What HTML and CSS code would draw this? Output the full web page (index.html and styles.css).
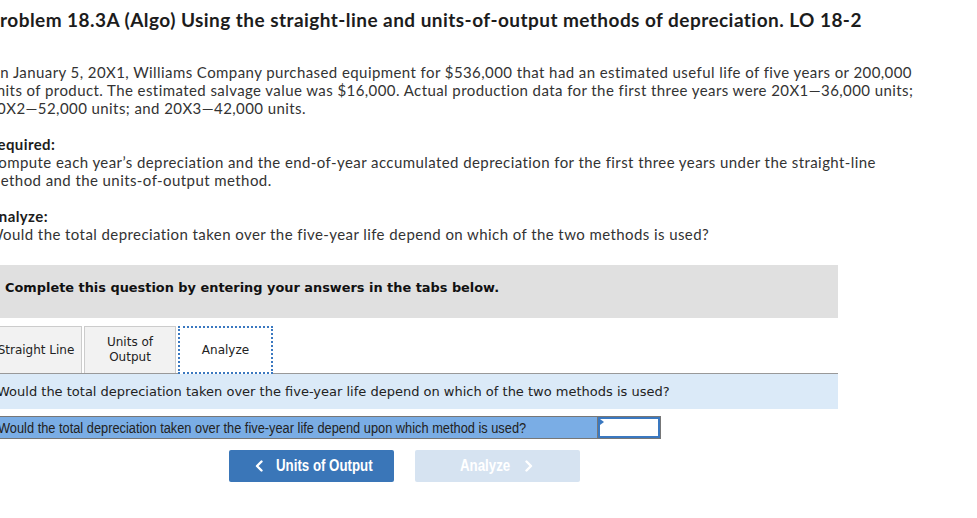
FILE: index.html
```html
<!DOCTYPE html>
<html>
<head>
<meta charset="utf-8">
<link rel="stylesheet" href="styles.css">
</head>
<body>
<div class="page">
  <h1 class="title">Problem 18.3A (Algo) Using the straight-line and units-of-output methods of depreciation. LO 18-2</h1>
  <p class="para">On January 5, 20X1, Williams Company purchased equipment for $536,000 that had an estimated useful life of five years or 200,000 units of product. The estimated salvage value was $16,000. Actual production data for the first three years were 20X1—36,000 units; 20X2—52,000 units; and 20X3—42,000 units.</p>
  <div class="section">
    <div class="label">Required:</div>
    <p class="para">Compute each year’s depreciation and the end-of-year accumulated depreciation for the first three years under the straight-line method and the units-of-output method.</p>
  </div>
  <div class="section">
    <div class="label">Analyze:</div>
    <p class="para">Would the total depreciation taken over the five-year life depend on which of the two methods is used?</p>
  </div>
  <div class="widget">
    <div class="banner">Complete this question by entering your answers in the tabs below.</div>
    <div class="tabs">
      <div class="tab tab-sl">Straight Line</div>
      <div class="tab tab-uo">Units of<br>Output</div>
      <div class="tab tab-active">Analyze</div>
    </div>
    <div class="prompt">Would the total depreciation taken over the five-year life depend on which of the two methods is used?</div>
    <div class="row">
      <div class="row-label"><span class="squeeze">Would the total depreciation taken over the five-year life depend upon which method is used?</span></div>
      <div class="row-input"><span class="marker"></span></div>
    </div>
    <div class="nav">
      <div class="btn btn-prev">
        <svg class="chev" width="8" height="12" viewBox="0 0 8 12"><path d="M6.5 1.5 L2 6 L6.5 10.5" fill="none" stroke="#fff" stroke-width="2.4" stroke-linecap="round" stroke-linejoin="round"/></svg>
        <span class="btn-text">Units of Output</span>
      </div>
      <div class="btn btn-next">
        <span class="btn-text">Analyze</span>
        <svg class="chev" width="8" height="12" viewBox="0 0 8 12"><path d="M1.5 1.5 L6 6 L1.5 10.5" fill="none" stroke="#fff" stroke-width="2.4" stroke-linecap="round" stroke-linejoin="round"/></svg>
      </div>
    </div>
  </div>
</div>
</body>
</html>
```
FILE: styles.css
```css
html, body { margin: 0; padding: 0; background: #fff; }
.page {
  margin-left: -12px;
  width: 985px;
  font-family: Lato, "Open Sans", sans-serif;
  color: #333;
}
.title {
  margin: 0;
  padding-top: 8px;
  font-size: 19px;
  line-height: 24px;
  font-weight: 700;
  letter-spacing: 0.45px;
  color: #1c1c1c;
}
.para {
  margin: 0;
  font-size: 15px;
  line-height: 18px;
  letter-spacing: 0.42px;
  width: 935px;
}
.title + .para { margin-top: 31px; }
.section { margin-top: 18px; }
.label {
  font-size: 15px;
  line-height: 18px;
  font-weight: 700;
  letter-spacing: 0.4px;
  color: #1c1c1c;
}
.widget { margin-top: 22px; width: 850px; }
.banner {
  background: #e0e0e0;
  height: 53px;
  box-sizing: border-box;
  padding-left: 17px;
  padding-bottom: 8px;
  display: flex;
  align-items: center;
  font-family: "DejaVu Sans", Verdana, sans-serif;
  font-weight: 700;
  font-size: 12.9px;
  color: #111;
}
.tabs {
  display: flex;
  margin-top: 8px;
  gap: 2px;
  height: 47px;
  border-bottom: 1px solid #999;
}
.tab {
  box-sizing: border-box;
  background: #f2f2f2;
  border: 1px solid #ccc;
  border-bottom: none;
  display: flex;
  align-items: center;
  justify-content: center;
  text-align: center;
  font-family: "DejaVu Sans", Verdana, sans-serif;
  font-size: 12px;
  line-height: 15px;
  color: #222;
}
.tab-sl { width: 94px; padding-left: 2px; }
.tab-uo { width: 92px; }
.tab-active {
  width: 95px;
  background: #fff;
  border: 2px dotted #3a78c0;
  margin-bottom: -1px;
  height: 48px;
}
.prompt {
  background: #dbeaf8;
  height: 35px;
  display: flex;
  align-items: center;
  padding-left: 9px;
  font-family: "DejaVu Sans", Verdana, sans-serif;
  font-size: 13px;
  color: #222;
}
.row {
  display: flex;
  margin-top: 7px;
  width: 673px;
  height: 23px;
  box-sizing: border-box;
  border: 1px solid #777;
}
.row-label {
  flex: 1;
  background: #7aade5;
  display: flex;
  align-items: center;
  padding-left: 9px;
  overflow: hidden;
  white-space: nowrap;
  font-family: "Liberation Sans", Arial, sans-serif;
  font-size: 14px;
  color: #222;
  border-right: 1px solid #777;
}
.squeeze {
  display: inline-block;
  transform: scaleX(0.915);
  transform-origin: left center;
}
.row-input {
  width: 62px;
  box-sizing: border-box;
  border: 2px solid #3a78c0;
  background: #fff;
  position: relative;
}
.marker {
  position: absolute;
  left: 0;
  top: 0;
  width: 0;
  height: 0;
  border-top: 3px solid transparent;
  border-bottom: 3px solid transparent;
  border-left: 4px solid #3a78c0;
}
.nav {
  display: flex;
  margin-top: 11px;
  margin-left: 241px;
  gap: 21px;
}
.btn {
  width: 165px;
  height: 32px;
  box-sizing: border-box;
  border-radius: 2px;
  display: flex;
  align-items: center;
  font-family: "Liberation Sans", Arial, sans-serif;
  font-weight: 700;
  font-size: 16px;
  color: #fff;
}
.btn-text {
  display: inline-block;
  white-space: nowrap;
  transform: scaleX(0.83);
  transform-origin: left center;
}
.btn-prev { background: #3a76b8; padding-left: 26px; }
.btn-prev .btn-text { margin-left: 13px; }
.btn-next { background: #d6e3f1; padding-left: 45px; }
.btn-next .btn-text { width: 64px; margin-right: 1px; }
.chev { display: block; flex: none; }
```
